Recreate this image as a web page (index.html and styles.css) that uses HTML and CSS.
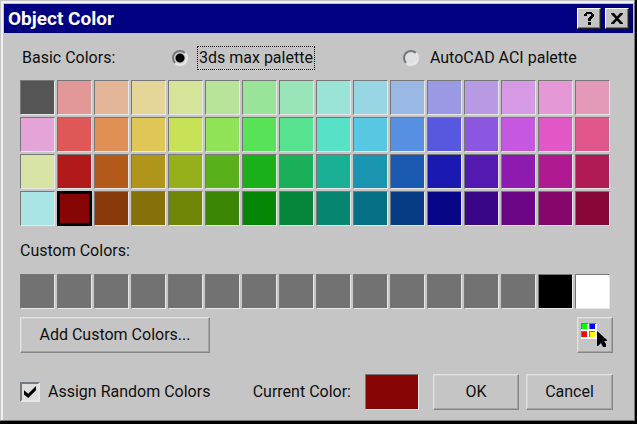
FILE: index.html
```html
<!DOCTYPE html>
<html lang="en">
<head>
<meta charset="utf-8">
<title>Object Color</title>
<link rel="stylesheet" href="styles.css">
</head>
<body>
<main class="window">
  <header class="titlebar">
    <h1 class="title">Object Color</h1>
    <button class="caption-button" type="button" aria-label="Help">
      <svg width="16" height="16" viewBox="0 0 16 16" aria-hidden="true"><path d="M3 5V3h1V2h1V1h6v1h1v1h1v3h-1v1h-1v1h-1v2H7V7h1V6h1V5h1V3H6v2zM7 11h3v3H7z"/></svg>
    </button>
    <button class="caption-button caption-close" type="button" aria-label="Close">
      <svg width="16" height="16" viewBox="0 0 16 16" aria-hidden="true"><path d="M2 2h3l3 3.500L11 2h3v1L9.500 7.500 14 12v1h-3L8 9.500 5 13H2v-1l4.500-4.500L2 3z"/></svg>
    </button>
  </header>
  <form class="content">
    <div class="palette-choice">
      <span class="choice-heading">Basic Colors:</span>
      <label class="choice"><input class="radio" type="radio" name="palette" checked><span class="choice-text focused">3ds max palette</span></label>
      <label class="choice"><input class="radio" type="radio" name="palette"><span class="choice-text">AutoCAD ACI palette</span></label>
    </div>
    <div class="swatches" id="basic" role="group" aria-label="Basic Colors"></div>
    <div class="custom-heading">Custom Colors:</div>
    <div class="swatches" id="custom" role="group" aria-label="Custom Colors"></div>
    <div class="tools">
      <button class="button add" type="button">Add Custom Colors...</button>
      <button class="button picker" type="button" aria-label="Select by Color">
        <svg width="34" height="34" viewBox="0 0 34 34" aria-hidden="true">
          <path fill="#fff" d="M4 6h15v15H4z"/>
          <path fill="#777" d="M3 5h7v7H3zM11 5h7v7h-7zM3 13h7v7H3zM11 13h7v7h-7z"/>
          <path fill="#fff" d="M9 6h2v15H9zM17 6h2v15h-2zM3 11h16v2H3zM3 19h16v2H3z"/>
          <path fill="#0f0" d="M4 6h5v5H4z"/>
          <path fill="#00f" d="M12 6h5v5h-5z"/>
          <path fill="#f00" d="M4 14h5v5H4z"/>
          <path fill="#ff0" d="M12 14h5v5h-5z"/>
          <path d="M19 13v15h1l3-3 2 4h3v-3l-2-3h3v-1z"/>
        </svg>
      </button>
    </div>
    <div class="actions">
      <label class="random"><input class="check" type="checkbox" checked>Assign Random Colors</label>
      <span class="current-label">Current Color:</span>
      <button class="swatch current" type="button" aria-label="Current Color"></button>
      <button class="button ok" type="submit">OK</button>
      <button class="button cancel" type="button">Cancel</button>
    </div>
  </form>
</main>
<script src="script.js"></script>
</body>
</html>
```
FILE: styles.css
```css
* { box-sizing: border-box; }
body {
  margin: 0;
  background: #000;
  color: #101010;
  font: 16px/24px Roboto, "Liberation Sans", sans-serif;
}
button, input { font: inherit; color: inherit; margin: 0; padding: 0; }
svg { display: block; }
.window {
  margin: 0 2px 2px 0;
  padding: 3px 1px 10px 2px;
  background: #c5c5c5;
  border: 1px solid #c5c5c5;
  border-right-color: #777;
  border-bottom-color: #777;
  box-shadow: inset 2px 2px #f0f0f0;
}
.titlebar {
  display: flex;
  align-items: center;
  height: 29px;
  margin-left: 1px;
  padding: 0 4px;
  background: #000080;
}
.title {
  flex: 1;
  margin: 0;
  color: #fff;
  font-size: 19px;
  font-weight: bold;
}
.caption-button {
  display: grid;
  place-items: center;
  width: 24px;
  height: 21px;
  background: #c5c5c5;
  border: 1px solid;
  border-color: #fff #222 #222 #fff;
  box-shadow: inset -1px -1px #777;
}
.caption-close { margin-left: 4px; }
.content { padding: 13px 20px 0 17px; }
.palette-choice { display: flex; align-items: center; }
.choice-heading { flex: none; width: 152px; padding-left: 2px; }
.choice { display: flex; flex: none; align-items: center; }
.choice + .choice { margin-left: 88px; }
.choice-text {
  margin-left: 9px;
  padding: 0 1px;
  border: 1px solid transparent;
  line-height: 22px;
}
.focused { border: 1px dotted #000; }
.radio {
  appearance: none;
  width: 16px;
  height: 16px;
  border: 2px solid;
  border-color: #737980 #e6e6e6 #e6e6e6 #737980;
  border-radius: 50%;
  background: #e0e0e0;
}
.radio:checked { background: radial-gradient(circle, #000 4px, #d0d0d0 5px); }
.swatches {
  display: grid;
  grid-template-columns: repeat(16, minmax(0, 1fr));
  gap: 2px;
  margin: 10px 3px 0 0;
}
.swatch {
  height: 35px;
  background: var(--color);
  border: 1px solid;
  border-color: #777 #e8e8e8 #e8e8e8 #777;
}
.selected { border: 3px solid #000; }
.custom-heading { margin-top: 13px; }
#custom { margin-top: 11px; }
.tools { display: flex; justify-content: space-between; margin-top: 8px; }
.button {
  height: 36px;
  background: #c5c5c5;
  border: 1px solid;
  border-color: #e2e2e2 #858585 #858585 #e2e2e2;
  box-shadow: inset -1px -1px #a4a4a4, inset 1px 1px #d0d0d0;
}
.add { width: 190px; }
.picker { width: 36px; }
.actions { display: flex; align-items: center; margin-top: 21px; }
.random { display: flex; align-items: center; gap: 8px; margin-right: auto; }
.check {
  appearance: none;
  display: grid;
  place-items: center;
  width: 20px;
  height: 20px;
  border: 2px solid;
  border-color: #737980 #e6e6e6 #e6e6e6 #737980;
  background: #ddd;
}
.check:checked::before {
  content: "";
  width: 12px;
  height: 12px;
  background: #000;
  clip-path: polygon(0 35%, 35% 65%, 100% 0, 100% 35%, 35% 100%, 0 70%);
}
.current { width: 54px; height: 36px; margin: 0 14px; background: #860606; }
.ok { width: 86px; margin-right: 7px; }
.cancel { width: 87px; }
```
FILE: script.js
```js
const basic = [
  "555555 e29896 e4b699 e4d699 d6e499 b8e499 99e499 99e4b8 99e4d6 99d6e4 99b8e4 9999e4 b899e4 d699e4 e499d6 e499b8",
  "e4a4d8 e05757 e09057 e0c557 c7e257 90e257 57e257 57e290 57e2c7 57c7e2 5790e2 5757e0 8c57e0 c557e0 e057c5 e0578c",
  "d8e4a6 b01a1a b3591a b0951a 95b01a 59b01a 1ab01a 1ab059 1ab095 1a95b0 1a59b0 1a1ab0 521ab0 8f1ab0 b01a91 b01a55",
  "a8e4e4 860606 863a0a 86700a 708606 3c8606 068606 06863a 068670 067086 063c86 060686 380686 6c0686 86066c 860638"
].join(" ").split(" ");
const custom = [...Array(14).fill("727272"), "000000", "ffffff"];

function fill(id, colors, selected) {
  const group = document.getElementById(id);
  colors.forEach((color, index) => {
    const swatch = document.createElement("button");
    swatch.type = "button";
    swatch.className = index === selected ? "swatch selected" : "swatch";
    swatch.style.setProperty("--color", "#" + color);
    swatch.setAttribute("aria-label", "#" + color);
    group.append(swatch);
  });
}

fill("basic", basic, 49);
fill("custom", custom, -1);
```
